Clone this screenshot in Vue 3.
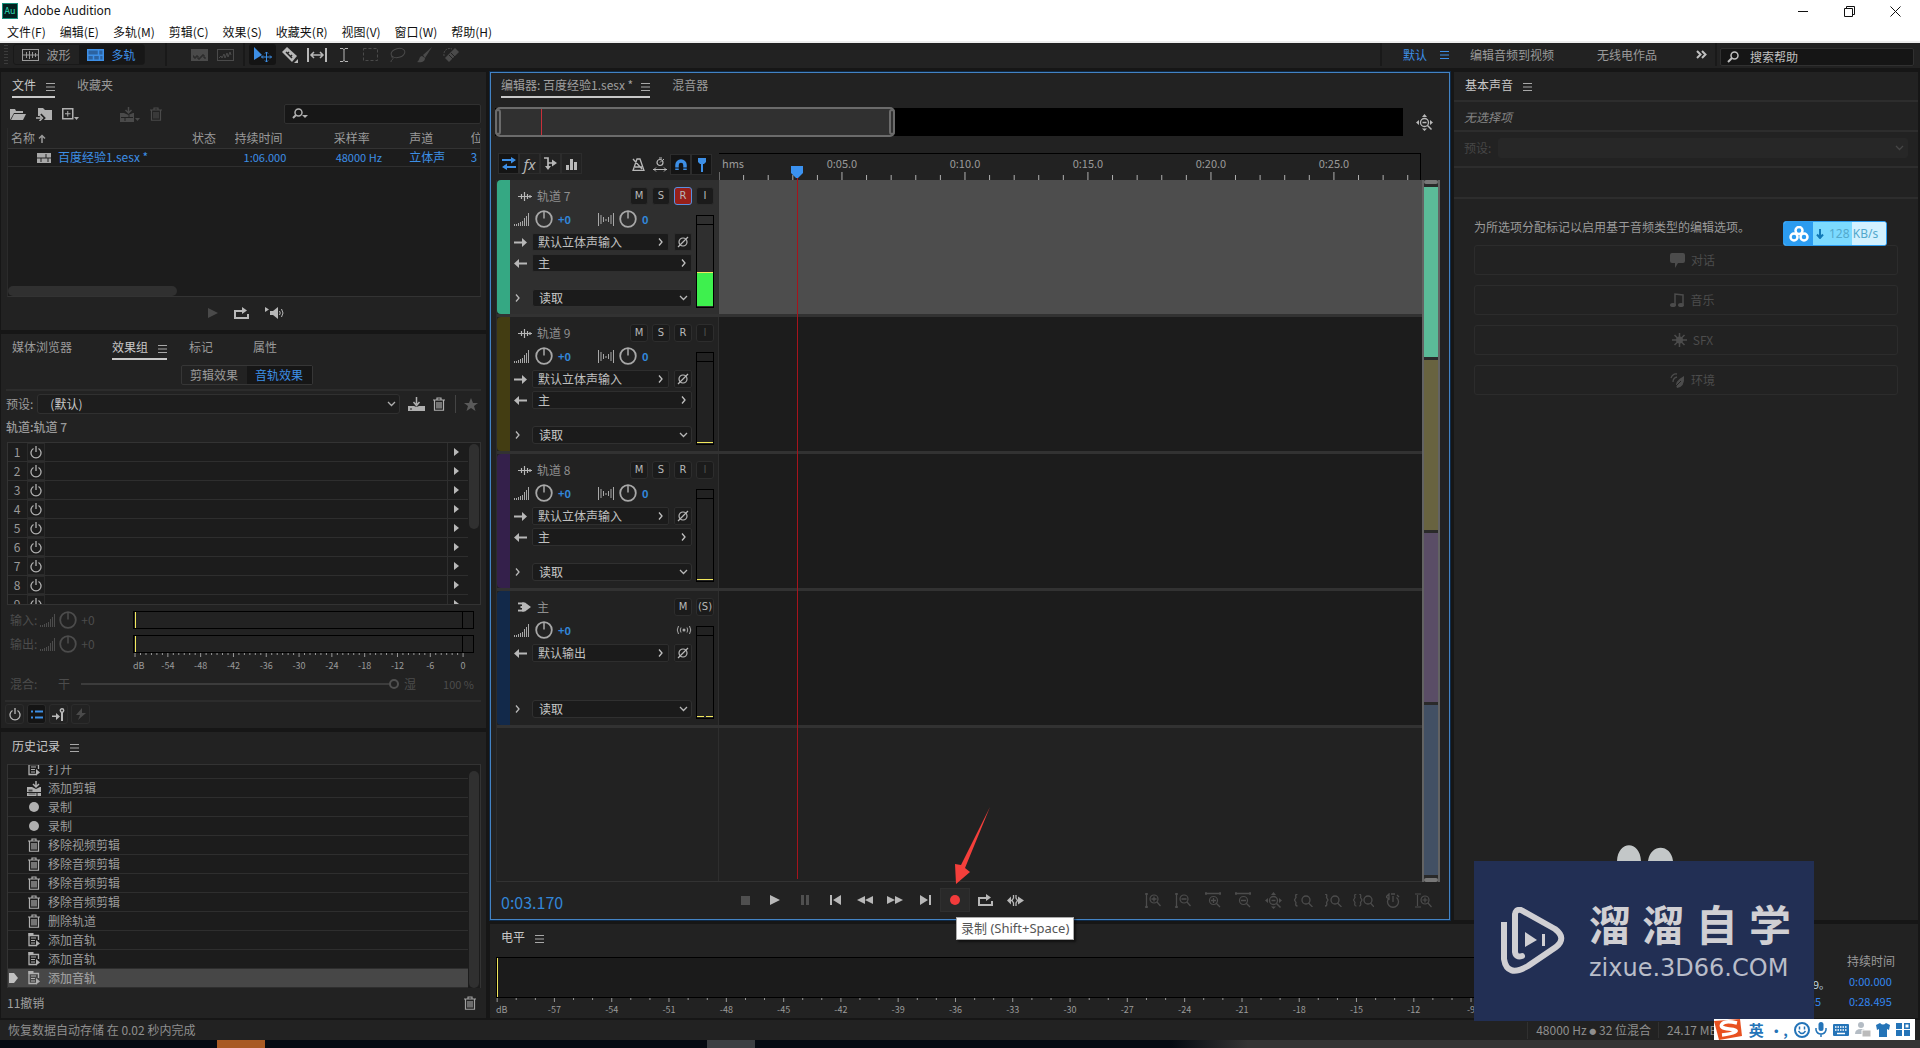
<script setup>
import { h, ref } from 'vue'

const glyphs = {
  wave: [17, 12, '<rect x=".5" y=".5" width="16" height="11" fill="none" stroke="currentColor"/><path d="M1 6h15M4.500 3v6M7.500 2v8M10.500 3v6M13.500 4v4" stroke="currentColor" fill="none"/>'],
  multi: [17, 12, '<path d="M.75.75h15.500v10.500H.75z" fill="#2c62a0" stroke="currentColor" stroke-width="1.500"/><path d="M0 6.250h17M11.500 1v5M6.500 7v4M12.500 7v4" stroke="currentColor" stroke-width="1.500"/>'],
  spectral: [17, 12, '<rect width="17" height="12" fill="currentColor"/><path d="M2 7h1v2h2V7h2v3h2V8h2V6h2v3h2" stroke="#222" fill="none"/>'],
  pitch: [17, 12, '<rect x=".5" y=".5" width="16" height="11" fill="none" stroke="currentColor"/><path d="M2 9l2-2 1 2 2-4 1 4 2-5 1 4 2-5 1 3" stroke="currentColor" fill="none"/>'],
  move: [20, 18, '<path d="M1 1v13l8-5z" fill="currentColor"/><path d="M13.500 6v10M8.500 11h10M12 7.500l1.500-1.500L15 7.500M12 14.500l1.500 1.500 1.500-1.500M10 9.500L8.500 11l1.500 1.500M17 9.500l1.500 1.500-1.500 1.500" stroke="currentColor" fill="none"/>'],
  razor: [18, 18, '<path d="M6 1L1 6l10 10 5-6z" fill="currentColor"/><path d="M5 6l6 6M6 8l2-2M9 11l2-2" stroke="#222" stroke-width="1.500"/><path d="M17 13v4h-4z" fill="currentColor"/>'],
  slip: [20, 14, '<path d="M1 0v14M19 0v14" stroke="currentColor" stroke-width="2"/><path d="M4 7h12M7 4L4 7l3 3M13 4l3 3-3 3" stroke="currentColor" stroke-width="1.500" fill="none"/>'],
  ibeam: [8, 16, '<path d="M0 1.500h3l1 1 1-1h3M4 2v12M0 14.500h3l1-1 1 1h3" stroke="currentColor" fill="none"/>'],
  marquee: [15, 13, '<rect x=".5" y=".5" width="14" height="12" fill="none" stroke="currentColor" stroke-dasharray="3 2"/>'],
  lasso: [17, 16, '<ellipse cx="9" cy="6" rx="7" ry="4.500" fill="none" stroke="currentColor" transform="rotate(-15 9 6)"/><path d="M3 9c-1 2 2 2 1 3s-2 1-2 3" stroke="currentColor" fill="none"/>'],
  brush: [16, 16, '<path d="M15 0L6 8l2 3z" fill="currentColor"/><path d="M5 9c-3 0-2 4-5 6 4 1 8 0 8-4z" fill="currentColor"/>'],
  heal: [17, 16, '<path d="M12 1l4 4-10 10-4-4z" fill="currentColor"/><path d="M8 6l4 4M6 8l4 4" stroke="#222"/><path d="M1 9C0 4 4 0 9 2" stroke="currentColor" fill="none" stroke-dasharray="2 1"/>'],
  lines: [9, 8, '<path d="M0 .5h9M0 4h9M0 7.500h9" stroke="currentColor"/>'],
  more: [11, 9, '<path d="M1 1l3.500 3.500L1 8M6 1l3.500 3.500L6 8" stroke="currentColor" stroke-width="2" fill="none"/>'],
  search: [12, 12, '<circle cx="7.500" cy="4.500" r="3.500" fill="none" stroke="currentColor" stroke-width="1.500"/><path d="M5 7L1 11" stroke="currentColor" stroke-width="2"/>'],
  searchDrop: [17, 12, '<circle cx="6.500" cy="4.500" r="3.500" fill="none" stroke="currentColor" stroke-width="1.500"/><path d="M4 7L1 10" stroke="currentColor" stroke-width="2"/><path d="M10 7h6l-3 3z" fill="currentColor"/>'],
  folder: [16, 12, '<path d="M0 12V1h5l1 2h7v2H4z" fill="currentColor"/><path d="M4 6h12l-3 6H1z" fill="currentColor"/>'],
  importFolder: [16, 14, '<path d="M2 9V1h5l2 2h7v10H8" fill="currentColor"/><path d="M0 11h6M4 8l3 3-3 3" stroke="#222" stroke-width="4"/><path d="M0 11h5M3.500 8l3 3-3 3" stroke="currentColor" stroke-width="1.500" fill="none"/>'],
  newFile: [17, 14, '<rect x=".75" y="1.750" width="10" height="10" fill="none" stroke="currentColor" stroke-width="1.500"/><path d="M3 6.750h5.500M5.750 4v5.500" stroke="currentColor"/><path d="M12 10h5l-2.500 3z" fill="currentColor"/>'],
  insert: [20, 15, '<path d="M8.500 0v6M5.500 3l3 3 3-3" stroke="currentColor" stroke-width="1.500" fill="none"/><path d="M0 6h4l4.500 2L13 6h1v9H0z" fill="currentColor"/><path d="M1 10.500h12M5 11v3M9 8v2" stroke="#222"/><path d="M15 11h5l-2.500 3z" fill="currentColor"/>'],
  addClip: [14, 15, '<path d="M9 0v6M6 3l3 3 3-3" stroke="currentColor" stroke-width="1.500" fill="none"/><path d="M0 6h5l4 2 4-2h1v9H0z" fill="currentColor"/><path d="M1.500 8.500h4v2h-4zM1.500 12.500h7v1h-7z" fill="#222" opacity=".7"/><path d="M0 11.500h14M10 12v3" stroke="#222"/>'],
  trash: [12, 14, '<path d="M0 3h12M4 2.500V1h4v1.500M1.500 3.500v9.750h9V3.500M4 5v6.500M6 5v6.500M8 5v6.500" stroke="currentColor" stroke-width="1.200" fill="none"/>'],
  session: [14, 10, '<rect width="14" height="10" fill="currentColor"/><path d="M0 5h14M9 1v4M4 5v4M11 5v4" stroke="#222"/>'],
  up: [8, 9, '<path d="M4 9V2M1 4.500l3-3 3 3" stroke="currentColor" stroke-width="1.500" fill="none"/>'],
  play: [10, 10, '<path d="M0 0v10l10-5z" fill="currentColor"/>'],
  loop: [15, 12, '<path d="M5 4H1v7h13V7" stroke="currentColor" stroke-width="2" fill="none"/><path d="M3 3h5V0l5 3.500L8 7V5H3z" fill="currentColor"/>'],
  speaker: [20, 12, '<path d="M0 0l4 2.500L0 5z" fill="currentColor"/><path d="M5 4h3l5-4v12L8 8H5z" fill="currentColor"/><path d="M14.500 4q1.500 2 0 4M16.500 2q3 4 0 8" stroke="currentColor" fill="none"/>'],
  save: [17, 14, '<path d="M0 9h6l2.500 1L11 9h6v5H0z" fill="currentColor"/><path d="M8.500 0v7M5.500 5l3 3.500 3-3.500" stroke="currentColor" stroke-width="1.500" fill="none"/><path d="M2 12h2" stroke="#222"/>'],
  star: [14, 13, '<path d="M7 0l2 5h5l-4 3 1.500 5L7 10l-4.500 3L4 8 0 5h5z" fill="currentColor"/>'],
  power: [12, 13, '<path d="M3.500 2.500a5 5 0 1 0 5 0M6 0v6" stroke="currentColor" stroke-width="1.300" fill="none"/>'],
  right: [5, 8, '<path d="M0 0v8l5-4z" fill="currentColor"/>'],
  bars: [16, 14, '<path d="M.5 14v-2M2.500 14v-2M4.500 14v-3M6.500 14v-4M8.500 14V9M10.500 14V6M12.500 14V4M14.500 14V1" stroke="currentColor"/>'],
  knob: [18, 18, '<circle cx="9" cy="9" r="7.800" fill="none" stroke="currentColor" stroke-width="1.800"/><path d="M9 2v6.500" stroke="currentColor" stroke-width="1.500"/>'],
  pan: [16, 13, '<path d="M.5 0v13M3 2v9M5.500 4v5M8 6v2M10.500 4v5M13 2v9M15.500 0v13" stroke="currentColor"/>'],
  list: [12, 9, '<path d="M0 1.500h2M0 7.500h2M4 1.500h8M4 7.500h8" stroke="currentColor" stroke-width="2"/>'],
  route: [13, 13, '<path d="M0 7.500h4V5l4 3.500L4 12V9H0z" fill="currentColor"/><path d="M10 4v9" stroke="currentColor" stroke-width="2"/><circle cx="10" cy="2.500" r="1.700" fill="none" stroke="currentColor" stroke-width="1.500"/>'],
  bolt: [10, 12, '<path d="M6 0L0 7h4l-2 5 8-7H6z" fill="currentColor"/>'],
  doc: [13, 14, '<path d="M1 0v12.500h8M1 2.500h9.500V7" stroke="currentColor" stroke-width="1.300" fill="none"/><path d="M.5 0h5v3h-5z" fill="currentColor"/><path d="M3 5h5M3 7.500h4M3 10h4" stroke="currentColor"/><path d="M8 7v6.500l4-3z" fill="currentColor"/>'],
  dot: [10, 10, '<circle cx="5" cy="5" r="5" fill="currentColor"/>'],
  marker: [9, 10, '<path d="M0 0h5l4 5-4 5H0z" fill="currentColor"/>'],
  swap: [14, 13, '<path d="M0 3h10M14 10H4" stroke="currentColor" stroke-width="1.800"/><path d="M9 0l5 3-5 3.500zM5 6.500v6.500L0 10z" fill="currentColor"/>'],
  send: [13, 13, '<path d="M0 1h4v9M4 6h5" stroke="currentColor" stroke-width="1.700" fill="none"/><path d="M1 9h6l-3 4zM8 2.500l5 3.500-5 3.500z" fill="currentColor"/>'],
  eq: [11, 12, '<path d="M0 7h3v5H0zM4 1h3v11H4zM8 4h3v8H8z" fill="currentColor"/>'],
  metronome: [13, 13, '<path d="M5 1h3l4 11.500H1zM3 9h7M1 1l9 10" stroke="currentColor" stroke-width="1.300" fill="none"/>'],
  clockSpan: [14, 15, '<circle cx="7" cy="5.500" r="3" fill="none" stroke="currentColor" stroke-width="1.200"/><path d="M6 1h3M10 2l1 1M7 5.500l2-2M0 12.500h14M3 10.500l-2 2 2 2M11 10.500l2 2-2 2" stroke="currentColor" fill="none"/>'],
  magnet: [12, 12, '<path d="M2 11V6a4 4 0 0 1 8 0v5" stroke="currentColor" stroke-width="3.500" fill="none"/><path d="M0 9h4M8 9h4" stroke="#111"/>'],
  pin: [8, 14, '<path d="M0 0h8v4L6 6H2L0 4zM3 6h2v8H3z" fill="currentColor"/>'],
  trackWave: [14, 9, '<path d="M0 4.500h14M3.500 2v5M6.500 0v9M9.500 2v5M12 3v3" stroke="currentColor" stroke-width="1.200"/>'],
  master: [13, 10, '<path d="M0 1.500h6M0 5h6M0 8.500h6" stroke="currentColor" stroke-width="2"/><path d="M4 .5h3l6 4.500-6 4.500H4z" fill="currentColor"/><path d="M0 3.250h3.500M0 6.750h3.500" stroke="#222"/><path d="M0 4h2.500v2H0z" fill="#222"/>'],
  inArrow: [13, 9, '<path d="M0 4.500h10" stroke="currentColor" stroke-width="2"/><path d="M8 0l5 4.500L8 9z" fill="currentColor"/>'],
  outArrow: [13, 9, '<path d="M13 4.500H3" stroke="currentColor" stroke-width="2"/><path d="M5 0L0 4.500 5 9z" fill="currentColor"/>'],
  chevR: [5, 8, '<path d="M1 .5L4 4 1 7.500" stroke="currentColor" stroke-width="1.300" fill="none"/>'],
  chevD: [9, 6, '<path d="M1 1l3.500 3.500L8 1" stroke="currentColor" stroke-width="1.300" fill="none"/>'],
  phase: [12, 12, '<circle cx="6" cy="6" r="4" fill="none" stroke="currentColor" stroke-width="1.200"/><path d="M1 11L11 1" stroke="currentColor" stroke-width="1.200"/>'],
  cast: [16, 8, '<circle cx="8" cy="4" r="1.500" fill="currentColor"/><path d="M5 1.500q-1.500 2.500 0 5M2.500 0q-2.500 4 0 8M11 1.500q1.500 2.500 0 5M13.500 0q2.500 4 0 8" stroke="currentColor" fill="none"/>'],
  stop: [9, 9, '<rect width="9" height="9" fill="currentColor"/>'],
  pause: [8, 10, '<path d="M0 0h3v10H0zM5 0h3v10H5z" fill="currentColor"/>'],
  prev: [11, 10, '<path d="M0 0h2v10H0zM11 0v10L3 5z" fill="currentColor"/>'],
  next: [11, 10, '<path d="M9 0h2v10H9zM0 0v10l8-5z" fill="currentColor"/>'],
  rew: [16, 8, '<path d="M8 0v8L0 4zM16 0v8L8 4z" fill="currentColor"/>'],
  ffwd: [16, 8, '<path d="M0 0v8l8-4zM8 0v8l8-4z" fill="currentColor"/>'],
  skip: [17, 11, '<path d="M4 1.500L0 5.500l4 4zM11 1.500l6 4-6 4z" fill="currentColor"/><path d="M6.500 0v3L5 5.500 6.500 8v3M9 0v3l1.500 2.500L9 8v3M3 5.500h2M10 5.500h3" stroke="currentColor" stroke-width="1.300" fill="none"/>'],
  zInV: [16, 15, '<path d="M1.500 0v15M0 1h3M0 14h3M12 9l3.500 4M6.500 6h5M9 3.500v5" stroke="currentColor" stroke-width="1.300"/><circle cx="9" cy="6" r="4" fill="none" stroke="currentColor" stroke-width="1.200"/>'],
  zOutV: [16, 15, '<path d="M1.500 0v15M0 1h3M0 14h3M12 9l3.500 4M6.500 6h5" stroke="currentColor" stroke-width="1.300"/><circle cx="9" cy="6" r="4" fill="none" stroke="currentColor" stroke-width="1.200"/>'],
  zInH: [16, 16, '<path d="M0 1.500h16M1 0v3M15 0v3M11 11l4 4M6 8.500h5M8.500 6v5" stroke="currentColor" stroke-width="1.300"/><circle cx="8.500" cy="8.500" r="4" fill="none" stroke="currentColor" stroke-width="1.200"/>'],
  zOutH: [16, 16, '<path d="M0 1.500h16M1 0v3M15 0v3M11 11l4 4M6 8.500h5" stroke="currentColor" stroke-width="1.300"/><circle cx="8.500" cy="8.500" r="4" fill="none" stroke="currentColor" stroke-width="1.200"/>'],
  zFull: [17, 17, '<circle cx="8.500" cy="8.500" r="4" fill="none" stroke="currentColor" stroke-width="1.300"/><path d="M6.500 8.500h4M11.500 11.500l4 4" stroke="currentColor" stroke-width="1.500"/><path d="M8.500 0L6 3h5zM8.500 17L6 14.500h5zM0 8.500L3 6v5zM17 8.500L14 6v5z" fill="currentColor"/>'],
  zLeft: [19, 13, '<path d="M3.500 0Q1 0 2 3.500L.5 6 2 8.500Q1 12 3.500 12M14.500 9l4 4" stroke="currentColor" stroke-width="1.300" fill="none"/><circle cx="12" cy="6" r="4" fill="none" stroke="currentColor" stroke-width="1.300"/>'],
  zRight: [17, 13, '<path d="M0 0q2.500 0 1.500 3.500L3 6 1.500 8.500Q2.500 12 0 12M12.500 9l4 4" stroke="currentColor" stroke-width="1.300" fill="none"/><circle cx="10" cy="6" r="4" fill="none" stroke="currentColor" stroke-width="1.300"/>'],
  zSel: [21, 13, '<path d="M3.500 0Q1 0 2 3.500L.5 6 2 8.500Q1 12 3.500 12M6 0q2.500 0 1.500 3.500L9 6 7.500 8.500Q8.500 12 6 12M17.500 9l3.500 4" stroke="currentColor" stroke-width="1.200" fill="none"/><circle cx="15" cy="6" r="4" fill="none" stroke="currentColor" stroke-width="1.300"/>'],
  timer: [14, 15, '<path d="M3.500 4.500a5.500 5.500 0 1 0 7 0M7 3v6M0 4l3-3v5zM5 1h4M11 2l2 2" stroke="currentColor" stroke-width="1.300" fill="none"/>'],
  zTrack: [17, 15, '<path d="M2.500 2v11M0 1h6M0 14h6M13 10l3.500 4M7.500 7h5M10 4.500v5" stroke="currentColor" stroke-width="1.200"/><circle cx="10" cy="7" r="4" fill="none" stroke="currentColor" stroke-width="1.200"/>'],
  chat: [15, 15, '<path d="M2 0h11q2 0 2 2v6q0 2-2 2H8l-3 5v-5H2Q0 10 0 8V2Q0 0 2 0z" fill="currentColor"/>'],
  music: [14, 14, '<path d="M5 12V1l8 1v9" stroke="currentColor" stroke-width="1.500" fill="none"/><ellipse cx="3" cy="12" rx="3" ry="2" fill="currentColor"/><ellipse cx="11" cy="12" rx="3" ry="2" fill="currentColor"/>'],
  burst: [15, 14, '<path d="M7.500 0v14M0 7h15M2.500 2l10 10M12.500 2l-10 10" stroke="currentColor" stroke-width="1.500"/><circle cx="7.500" cy="7" r="3.500" fill="currentColor"/>'],
  leaf: [15, 15, '<path d="M14 3q1 11-7 12-4-6 7-12z" fill="currentColor"/><path d="M1 5q2-5 6-4M3 9q0-4 4-5" stroke="currentColor" stroke-width="1.300" fill="none"/><path d="M4 15l7-7" stroke="#222"/>'],
  minus: [10, 10, '<path d="M0 5.500h10" stroke="currentColor"/>'],
  restore: [11, 11, '<path d="M.5 2.500h8v8h-8zM2.500 2V.5h8v8H9" stroke="currentColor" fill="none"/>'],
  close: [11, 11, '<path d="M.5.5l10 10M10.500.5l-10 10" stroke="currentColor" fill="none"/>'],
  smile: [16, 16, '<circle cx="8" cy="8" r="7" fill="none" stroke="currentColor" stroke-width="2"/><path d="M4.500 9q3.500 5 7 0M5.500 4.500v3M10.500 4.500v3" stroke="currentColor" stroke-width="1.500" fill="none"/>'],
  mic: [12, 15, '<rect x="3.500" width="5" height="9" rx="2.500" fill="currentColor"/><path d="M1 6v2q1 4 5 4t5-4V6M6 12v3" stroke="currentColor" stroke-width="1.500" fill="none"/>'],
  keys: [16, 12, '<rect width="16" height="12" rx="1" fill="currentColor"/><path d="M2 3h12M2 6h12" stroke="#fff" stroke-width="1.500" stroke-dasharray="1.500 1"/><path d="M4 9.500h8" stroke="#fff" stroke-width="1.500"/>'],
  person: [16, 15, '<circle cx="6" cy="3" r="3" fill="currentColor"/><path d="M0 12q0-5 6-5t5 5z" fill="currentColor"/><path d="M7 8h9v7H7z" fill="#bbb" stroke="#fff"/>'],
  shirt: [14, 14, '<path d="M4 0q3 3 6 0l4 2-1 5-2-1v8H3V6L1 7 0 2z" fill="currentColor"/>'],
  grid: [14, 13, '<path d="M0 0h6v6H0zM8 7h6v6H8zM0 7h6v6H0z" fill="currentColor"/><path d="M8.750.75h4.500v4.500h-4.500z" fill="none" stroke="currentColor" stroke-width="1.500"/>'],
  sogou: [29, 21, '<path d="M0 2L26 0l2 17-23 4z" fill="#e8501f"/><path d="M23 4Q11 1 8 5t7 5 6 3-13 3" stroke="#fff" stroke-width="3.500" fill="none"/>'],
  baidu: [20, 16, '<circle cx="10" cy="4.500" r="3.500" fill="none" stroke="#fff" stroke-width="2.500"/><circle cx="5" cy="11" r="3.500" fill="none" stroke="#fff" stroke-width="2.500"/><circle cx="15" cy="11" r="3.500" fill="none" stroke="#fff" stroke-width="2.500"/>'],
  down: [8, 10, '<path d="M4 0v9M1 5.500L4 9l3-3.500" stroke="currentColor" stroke-width="2" fill="none"/>'],
  brand: [66, 68, '<path d="M15 8q0-6 6-5l34 19q12 9 1 18L28 59Q7 71 4 52V15" fill="none" stroke="#d0cfd3" stroke-width="6" stroke-linejoin="round"/><path d="M15 8v37q1 6 7 4" fill="none" stroke="#d0cfd3" stroke-width="6" stroke-linecap="round"/><path d="M25 25v15l12-7zM42 27h3v12h-3z" fill="#d0cfd3"/>'],
  ears: [56, 16, '<path d="M0 16C1-5 23-5 24 16zM31 16C34-2 54-1 56 16z" fill="#c3c7c8"/>'],
  arrow: [36, 78, '<path d="M35 0L6 58 0 57l1 20 14-12-5-4z" fill="#f43f3b"/>'],
}
const Icon = (props) => {
  const [w, hh, body] = glyphs[props.name]
  return h('svg', { class: 'icon', width: w, height: hh, viewBox: `0 0 ${w} ${hh}`, 'aria-hidden': 'true', innerHTML: body })
}
Icon.props = ['name']

const menus = ['文件(F)', '编辑(E)', '多轨(M)', '剪辑(C)', '效果(S)', '收藏夹(R)', '视图(V)', '窗口(W)', '帮助(H)']
const tools = [
  ['move', 'on'], ['razor', ''], ['slip', ''], ['ibeam', ''],
  ['marquee', 'off'], ['lasso', 'off'], ['brush', 'off'], ['heal', 'off'],
]
const slots = [1, 2, 3, 4, 5, 6, 7, 8, 9]
const history = [
  ['doc', '打开'], ['addClip', '添加剪辑'], ['dot', '录制'], ['dot', '录制'], ['trash', '移除视频剪辑'],
  ['trash', '移除音频剪辑'], ['trash', '移除音频剪辑'], ['trash', '移除音频剪辑'], ['trash', '删除轨道'],
  ['doc', '添加音轨'], ['doc', '添加音轨'], ['doc', '添加音轨'],
]
const tracks = [
  { name: '轨道 7', color: '#35a883', input: '默认立体声输入', output: '主', armed: true },
  { name: '轨道 9', color: '#433d12', input: '默认立体声输入', output: '主' },
  { name: '轨道 8', color: '#34204b', input: '默认立体声输入', output: '主' },
  { name: '主', color: '#12294a', output: '默认输出', master: true },
]
const transport = ['stop', 'play', 'pause', 'prev', 'rew', 'ffwd', 'next', 'dot', 'loop', 'skip']
const zooms = ['zInV', 'zOutV', 'zInH', 'zOutH', 'zFull', 'zLeft', 'zRight', 'zSel', 'timer', 'zTrack']
const kinds = [['chat', '对话'], ['music', '音乐'], ['burst', 'SFX'], ['leaf', '环境']]

const viewSeconds = 28.5
const playhead = 3.17
const seconds = Array.from({ length: 29 }, (_, i) => i)
const pct = (n) => `${n.toFixed(2)}%`
const atSecond = (s) => pct((s / viewSeconds) * 100)
const stamp = (s) => `0:${String(s).padStart(2, '0')}.0`
const db = Array.from({ length: 61 }, (_, i) => i)
const atRack = (i) => pct(0.6 + (i / 60) * 96.2)
const atLevel = (i) => pct(0.1 + (i / 60) * 98.1)
const mix = ref(100)
</script>

<template>
  <div class="app">
    <header class="titlebar">
      <span class="logo">Au</span>
      <span class="title">Adobe Audition</span>
      <div class="winbtns">
        <button aria-label="最小化"><Icon name="minus" /></button>
        <button aria-label="还原"><Icon name="restore" /></button>
        <button aria-label="关闭"><Icon name="close" /></button>
      </div>
    </header>
    <nav class="menubar">
      <button v-for="m in menus" :key="m">{{ m }}</button>
    </nav>

    <div class="toolbar">
      <span class="grip"></span>
      <div class="views">
        <button><Icon name="wave" />波形</button>
        <button class="on"><Icon name="multi" />多轨</button>
      </div>
      <span class="sep"></span>
      <div class="displays off"><Icon name="spectral" /><Icon name="pitch" /></div>
      <span class="sep"></span>
      <div class="tools">
        <button v-for="t in tools" :key="t[0]" :class="t[1]" :aria-label="t[0]"><Icon :name="t[0]" /></button>
      </div>
      <div class="spaces">
        <button class="blue">默认<Icon name="lines" /></button>
        <button>编辑音频到视频</button>
        <button>无线电作品</button>
        <button class="light" aria-label="更多"><Icon name="more" /></button>
      </div>
      <label class="help"><Icon name="search" /><input type="text" value="搜索帮助" aria-label="搜索帮助" /></label>
    </div>

    <main class="work">
      <div class="left">
        <section class="panel files">
          <div class="tabs">
            <button class="active">文件<Icon name="lines" /></button>
            <button>收藏夹</button>
          </div>
          <div class="filebar">
            <button aria-label="打开"><Icon name="folder" /></button>
            <button aria-label="导入"><Icon name="importFolder" /></button>
            <button aria-label="新建"><Icon name="newFile" /></button>
            <button class="off gap" aria-label="插入"><Icon name="insert" /></button>
            <button class="off" aria-label="删除"><Icon name="trash" /></button>
            <label class="filter"><Icon name="searchDrop" /><input type="text" aria-label="筛选" /></label>
          </div>
          <div class="filelist">
            <table>
              <thead>
                <tr><th class="cname">名称<Icon name="up" /></th><th class="cstate">状态</th><th class="cdur">持续时间</th><th class="crate">采样率</th><th class="cchan">声道</th><th class="cbit">位</th></tr>
              </thead>
              <tbody>
                <tr><td class="fname"><Icon name="session" />百度经验1.sesx *</td><td></td><td class="num">1:06.000</td><td class="num">48000 Hz</td><td>立体声</td><td>3</td></tr>
              </tbody>
            </table>
            <span class="hscroll"></span>
          </div>
          <div class="preview">
            <button class="off" aria-label="播放"><Icon name="play" /></button>
            <button aria-label="循环"><Icon name="loop" /></button>
            <button aria-label="自动播放"><Icon name="speaker" /></button>
          </div>
        </section>

        <section class="panel rack">
          <div class="tabs wide">
            <button>媒体浏览器</button>
            <button class="active">效果组<Icon name="lines" /></button>
            <button>标记</button>
            <button>属性</button>
          </div>
          <div class="switch">
            <button>剪辑效果</button><button class="on">音轨效果</button>
          </div>
          <div class="preset">
            <label for="preset">预设:</label>
            <div class="pick"><select id="preset"><option>(默认)</option></select><Icon name="chevD" /></div>
            <button aria-label="保存"><Icon name="save" /></button>
            <button aria-label="删除"><Icon name="trash" /></button>
            <span class="bar"></span>
            <button class="dim" aria-label="收藏"><Icon name="star" /></button>
          </div>
          <p class="which">轨道:轨道 7</p>
          <div class="slots">
            <ol>
              <li v-for="n in slots" :key="n">
                <span class="no">{{ n }}</span>
                <button class="pw" :aria-label="'开关 ' + n"><Icon name="power" /></button>
                <span class="fx"></span>
                <button class="go" :aria-label="'选择 ' + n"><Icon name="right" /></button>
              </li>
            </ol>
            <span class="vscroll short"></span>
          </div>
          <div class="io">
            <div class="knobs">
              <div class="kr">输入:<Icon name="bars" /><Icon name="knob" />+0</div>
              <div class="kr">输出:<Icon name="bars" /><Icon name="knob" />+0</div>
            </div>
            <div class="meters">
              <div class="hm"></div>
              <div class="hm"></div>
              <svg class="ruler" width="100%" height="22">
                <line v-for="i in db" :key="i" :x1="atRack(i)" :x2="atRack(i)" y1="0" :y2="i % 6 ? 2 : 4" />
                <text x="0" y="16">dB</text>
                <text v-for="i in 10" :key="i" :x="atRack(i * 6)" y="16">{{ i * 6 - 60 }}</text>
              </svg>
            </div>
          </div>
          <div class="mix">
            <label for="mix">混合:</label><span>干</span>
            <input id="mix" v-model="mix" type="range" min="0" max="100" disabled />
            <span>湿</span><output for="mix">{{ mix }} %</output>
          </div>
          <div class="rackfoot">
            <button aria-label="电源"><Icon name="power" /></button>
            <button class="on" aria-label="列表"><Icon name="list" /></button>
            <button aria-label="推子"><Icon name="route" /></button>
            <button class="off" aria-label="预渲染"><Icon name="bolt" /></button>
          </div>
        </section>

        <section class="panel hist">
          <div class="tabs"><button class="sole">历史记录<Icon name="lines" /></button></div>
          <div class="histlist">
            <ul>
              <li v-for="(r, i) in history" :key="i" :class="{ cur: i === history.length - 1 }">
                <span class="mk"><Icon v-if="i === history.length - 1" name="marker" /></span>
                <span class="hi"><Icon :name="r[0]" /></span>{{ r[1] }}
              </li>
            </ul>
            <span class="vscroll"></span>
          </div>
          <div class="histfoot"><span>11撤销</span><button aria-label="删除"><Icon name="trash" /></button></div>
        </section>
      </div>

      <section class="panel editor">
        <div class="tabs">
          <button class="active plain">编辑器: 百度经验1.sesx *<Icon name="lines" /></button>
          <button>混音器</button>
        </div>
        <div class="overview">
          <div class="strip"><div class="thumb"><span class="grab"></span><span class="ov"></span><span class="grab end"></span></div></div>
          <button aria-label="全部缩小"><Icon name="zFull" /></button>
        </div>
        <div class="headrow">
          <div class="modes">
            <div class="grp">
              <button class="on" aria-label="输入输出"><Icon name="swap" /></button>
              <button class="fxb">fx</button>
              <button aria-label="发送"><Icon name="send" /></button>
              <button aria-label="均衡"><Icon name="eq" /></button>
            </div>
            <div class="snap">
              <button aria-label="节拍器"><Icon name="metronome" /></button>
              <button aria-label="时间伸缩"><Icon name="clockSpan" /></button>
              <button class="on" aria-label="对齐"><Icon name="magnet" /></button>
              <button class="on" aria-label="播放指示器"><Icon name="pin" /></button>
            </div>
          </div>
          <div class="time">
            <svg width="100%" height="26">
              <text class="hms" x="3" y="14">hms</text>
              <g v-for="s in seconds" :key="s">
                <line :x1="atSecond(s)" :x2="atSecond(s)" :y1="s % 5 ? 21 : 18" y2="26" />
                <text v-if="s && s % 5 === 0" :x="atSecond(s)" y="14">{{ stamp(s) }}</text>
              </g>
            </svg>
          </div>
        </div>
        <div class="body">
          <div class="tracks">
            <div v-for="t in tracks" :key="t.name" class="track" :class="{ armed: t.armed }">
              <span class="color" :style="{ background: t.color }"></span>
              <div class="head">
                <div class="r1">
                  <span class="ti"><Icon :name="t.master ? 'master' : 'trackWave'" /></span>
                  <span class="tn">{{ t.name }}</span>
                  <template v-if="t.master"><button>M</button><button>(S)</button></template>
                  <template v-else>
                    <button>M</button><button>S</button>
                    <button :class="{ rec: t.armed }">R</button>
                    <button :class="{ faint: !t.armed }">I</button>
                  </template>
                </div>
                <div class="r2">
                  <Icon name="bars" /><span class="kn"><Icon name="knob" /></span><b>+0</b>
                  <template v-if="t.master"><span class="cast"><Icon name="cast" /></span></template>
                  <template v-else><Icon name="pan" /><span class="kn"><Icon name="knob" /></span><b>0</b></template>
                </div>
                <div class="r3">
                  <Icon :name="t.master ? 'outArrow' : 'inArrow'" />
                  <button class="pop">{{ t.master ? t.output : t.input }}<Icon name="chevR" /></button>
                  <button class="ph" aria-label="反相"><Icon name="phase" /></button>
                </div>
                <div v-if="!t.master" class="r3"><Icon name="outArrow" /><button class="pop">{{ t.output }}<Icon name="chevR" /></button></div>
                <div class="r3 auto">
                  <button class="exp" aria-label="展开"><Icon name="chevR" /></button>
                  <div class="pick"><select aria-label="自动化模式"><option>读取</option></select><Icon name="chevD" /></div>
                </div>
                <div class="meter" :class="{ two: t.master }"><i></i><i v-if="t.master"></i></div>
              </div>
              <div class="lane"></div>
            </div>
            <div class="rest"></div>
            <div class="cursor">
              <div class="ph-line" :style="{ left: atSecond(playhead) }">
                <svg width="12" height="12"><path d="M0 0h12v7l-5 5H5L0 7z" fill="#3b92f0" /></svg>
              </div>
            </div>
          </div>
          <div class="navi"><span class="cap"></span><i class="n1"></i><i class="n2"></i><i class="n3"></i><i class="n4"></i><span class="cap"></span></div>
        </div>
        <div class="transport">
          <output class="clock">0:03.170</output>
          <div class="keysrow">
            <div v-for="k in transport" :key="k" class="key">
              <button :class="{ dim: k === 'stop' || k === 'pause', record: k === 'dot' }" :aria-label="k"><Icon :name="k" /></button>
              <template v-if="k === 'dot'">
                <span class="pointer"><Icon name="arrow" /></span>
                <span class="tip" role="tooltip">录制 (Shift+Space)</span>
              </template>
            </div>
          </div>
          <div class="zoomrow"><button v-for="z in zooms" :key="z" :aria-label="z"><Icon :name="z" /></button></div>
        </div>
      </section>

      <section class="panel sound">
        <div class="tabs"><button class="sole">基本声音<Icon name="lines" /></button></div>
        <p class="none">无选择项</p>
        <div class="spre"><label for="spre">预设:</label><div class="pick"><select id="spre" disabled></select><Icon name="chevD" /></div></div>
        <div class="blank"></div>
        <p class="hint">为所选项分配标记以启用基于音频类型的编辑选项。</p>
        <div class="kinds"><button v-for="k in kinds" :key="k[1]" disabled><Icon :name="k[0]" />{{ k[1] }}</button></div>
      </section>

      <div class="bottom">
        <section class="panel level">
          <div class="tabs"><button class="sole">电平<Icon name="lines" /></button></div>
          <div class="lv"></div>
          <svg class="ruler" width="100%" height="20">
            <line v-for="i in db" :key="i" :x1="atLevel(i)" :x2="atLevel(i)" y1="0" :y2="i % 3 ? 2 : 4" />
            <text x="0" y="15">dB</text>
            <text v-for="i in 17" :key="i" :x="atLevel(i * 3)" y="15">{{ i * 3 - 60 }}</text>
          </svg>
        </section>
        <section class="panel range">
          <table>
            <thead><tr><th></th><th>持续时间</th></tr></thead>
            <tbody>
              <tr><td></td><td>0:00.000</td></tr>
              <tr><td>0:28.495</td><td>0:28.495</td></tr>
            </tbody>
          </table>
        </section>
      </div>
    </main>

    <footer class="status">
      <span class="msg">恢复数据自动存储 在 0.02 秒内完成</span>
      <span class="cell">48000 Hz <small>●</small> 32 位混合</span>
      <span class="cell mem">24.17 MB</span>
    </footer>
    <div class="taskbar"><span class="t1"></span><span class="t2"></span><span class="tc">14:05</span></div>

    <div class="speed">
      <span class="bd"><Icon name="baidu" /></span>
      <span class="rate"><Icon name="down" />128 KB/s</span>
    </div>
    <span class="ears"><Icon name="ears" /></span>
    <span class="stray">9。</span>
    <div class="brand">
      <Icon name="brand" />
      <div class="bt">
        <div class="cn"><span v-for="(c, i) in '溜溜自学'" :key="i">{{ c }}</span></div>
        <div class="en">zixue.3D66.COM</div>
      </div>
    </div>
    <div class="ime">
      <Icon name="sogou" /><b>英</b><span class="pt">•,</span><Icon name="smile" /><Icon name="mic" /><Icon name="keys" />
      <span class="pale"><Icon name="person" /></span><Icon name="shirt" /><Icon name="grid" />
    </div>
  </div>
</template>

<style>
body { margin: 0; background: #161616; }
</style>

<style scoped>
* { box-sizing: border-box; }
.app {
  position: relative; display: flex; flex-direction: column; min-height: 100vh; overflow: hidden;
  background: #161616; color: #9a9a9a; font: 12px/16px "Noto Sans CJK SC", sans-serif;
}
.icon { flex: none; display: block; }
button, input, select { font: inherit; color: inherit; background: none; border: 0; margin: 0; padding: 0; }
button { display: flex; align-items: center; justify-content: center; white-space: nowrap; }
select { appearance: none; opacity: 1; }
p { margin: 0; }
.off { color: #4a4a4a; }

.titlebar { display: flex; align-items: center; height: 22px; background: #fff; color: #111; }
.logo { width: 16px; height: 16px; margin: 0 6px 0 2px; border: 1px solid #17917c; background: #03211f; color: #2fdcb5; font-size: 9px; line-height: 14px; text-align: center; }
.title { font-family: "Noto Sans", sans-serif; }
.winbtns { display: flex; margin-left: auto; }
.winbtns button { width: 46px; height: 20px; }
.winbtns button:last-child { margin-right: 2px; }
.menubar { display: flex; gap: 14px; height: 21px; padding-left: 7px; background: #fff; color: #111; border-bottom: 2px solid #eee; }

.toolbar { display: flex; align-items: center; height: 25px; margin-bottom: 4px; padding-bottom: 2px; background: #222; }
.grip { width: 4px; height: 19px; margin: 0 5px 0 4px; background: repeating-linear-gradient(#3c3c3c 0 1px, #222 1px 3px); }
.views { display: flex; border: 1px solid #191919; border-radius: 3px; }
.views button { gap: 7px; width: 65px; height: 19px; }
.views .on { background: #171717; color: #3d8fe6; }
.sep { width: 2px; height: 23px; background: #191919; margin: 0 0 0 20px; }
.displays { display: flex; gap: 9px; padding-left: 24px; }
.displays + .sep { margin: 0 4px 0 9px; }
.tools { display: flex; color: #b8b8b8; }
.tools button { width: 27px; height: 21px; }
.tools .on { background: #141414; border-radius: 3px; color: #3d8fe6; }
.tools .off { color: #4a4a4a; }
.spaces { display: flex; align-items: center; gap: 39px; height: 23px; margin-left: auto; padding: 0 8px 0 21px; border-left: 2px solid #191919; border-right: 2px solid #191919; }
.spaces button:first-child { gap: 13px; margin-right: -18px; }
.spaces button:nth-child(2) { margin-right: 4px; }
.blue { color: #3d8fe6; }
.light { color: #c0c0c0; }
.help { display: flex; align-items: center; gap: 11px; width: 194px; height: 18px; margin: 4px 6px 0 3px; padding-left: 6px; background: #151515; border: 1px solid #303030; border-radius: 2px; color: #c0c0c0; }
.help input { flex: 1; min-width: 0; }

.work { flex: 1; display: grid; grid-template-columns: minmax(0, 486fr) minmax(0, 960fr) minmax(0, 464fr); grid-template-rows: 1fr 94px; gap: 4px; padding: 0 2px 2px 0; }
.left { grid-row: 1 / 3; display: flex; flex-direction: column; gap: 4px; padding-left: 1px; }
.panel { background: #222; display: flex; flex-direction: column; min-width: 0; }
.tabs { display: flex; gap: 22px; padding: 5px 11px 0; height: 26px; flex: none; }
.tabs button { height: 21px; gap: 10px; align-items: flex-start; border-bottom: 2px solid transparent; }
.tabs .icon { margin-top: 6px; color: #a8a8a8; }
.tabs .active, .tabs .sole { color: #c8c8c8; }
.tabs .active { border-color: #c8c8c8; }
.tabs .plain { color: #9f9f9f; }

.files { flex: 1; }
.filebar { display: flex; align-items: center; height: 30px; padding: 2px 5px 0 9px; color: #b0b0b0; gap: 10px; }
.filebar .gap { margin-left: 31px; }
.filebar .off { color: #4a4a4a; }
.filter { display: flex; align-items: center; margin-left: auto; width: 197px; height: 20px; padding-left: 7px; background: #171717; border: 1px solid #303030; border-radius: 2px; }
.filter input { flex: 1; min-width: 0; }
.filelist { flex: 1; display: flex; flex-direction: column; justify-content: space-between; margin: 0 5px 0 6px; background: #1c1c1c; border-bottom: 1px solid #333; border-right: 1px solid #2b2b2b; border-left: 1px solid #2b2b2b; }
.filelist table { width: 100%; table-layout: fixed; border-collapse: collapse; }
.filelist th { height: 20px; padding: 0; font-weight: 400; text-align: left; background: #222; border-bottom: 1px solid #333; white-space: nowrap; overflow: hidden; }
.filelist th .icon { display: inline-block; margin-left: 3px; }
.filelist td { height: 18px; padding: 0; color: #3d8fe6; border-bottom: 1px solid #2e2e2e; white-space: nowrap; overflow: hidden; }
.filelist .num { font-size: 11px; padding-left: 2px; }
.filelist .cname { width: 39%; padding-left: 3px; }
.filelist .cstate { width: 9%; }
.filelist .cdur { width: 21%; }
.filelist .crate { width: 16%; }
.filelist .cchan { width: 13%; }
.filelist .num:nth-child(3) { padding-left: 9px; }
.fname .icon { display: inline-block; margin: 0 7px -1px 29px; color: #a8a8a8; }
.hscroll { width: 169px; height: 10px; border-radius: 5px; background: #303030; }
.preview { display: flex; align-items: center; justify-content: center; gap: 16px; height: 33px; padding: 0 0 2px 6px; color: #b8b8b8; }
.preview .off { color: #4a4a4a; }

.wide { gap: 40px; }
.wide button:nth-child(3) { margin-left: -18px; }
.switch { display: flex; align-self: center; margin: 5px 0 4px 6px; border: 1px solid #363636; border-radius: 2px; }
.switch button { width: 65px; height: 18px; }
.switch .on { background: #161616; color: #3d8fe6; }
.preset { display: flex; align-items: center; gap: 8px; margin: 0 5px; padding: 3px 3px 1px 0; border-top: 2px solid #2c2c2c; color: #b0b0b0; }
.preset label { margin-right: -4px; color: #9a9a9a; }
.pick { position: relative; flex: 1; display: flex; align-items: center; }
.pick select { width: 100%; height: 20px; padding-left: 12px; background: #1d1d1d; border: 1px solid #303030; border-radius: 3px; color: #c8c8c8; }
.pick .icon { position: absolute; right: 4px; pointer-events: none; }
.bar { width: 1px; height: 18px; background: #444; margin-left: 2px; }
.preset .dim { color: #5a5a5a; }
.which { margin: 4px 5px 7px; font-weight: 500; }
.slots { display: flex; height: 163px; margin: 0 5px 0 6px; overflow: hidden; background: #1c1c1c; border: 1px solid #333; }
.slots ol { flex: 1; margin: 0; padding: 0; list-style: none; }
.slots li { display: flex; align-items: center; height: 19px; border-bottom: 1px solid #2e2e2e; }
.no { width: 18px; text-align: center; }
.pw { width: 18px; height: 18px; margin-left: 1px; border: 1px solid #2a2a2a; color: #b0b0b0; }
.fx { flex: 1; height: 18px; border-right: 1px solid #2e2e2e; }
.go { width: 20px; padding-right: 4px; color: #b8b8b8; }
.vscroll { width: 10px; margin: 6px 1px 0; border-radius: 5px; background: #303030; }
.vscroll.short { height: 85px; margin-top: 1px; }
.io { display: flex; padding: 6px 12px 0 9px; }
.knobs { flex: none; width: 123px; color: #4c4c4c; }
.kr { display: flex; align-items: center; gap: 4px; height: 24px; margin-top: -3px; margin-bottom: 3px; white-space: nowrap; }
.kr .icon { margin-left: -1px; }
.meters { flex: 1; min-width: 0; }
.hm { height: 18px; margin-bottom: 6px; background: linear-gradient(90deg, transparent 1px, #f2e85c 1px 2px, transparent 2px calc(97% - 1px), #000 calc(97% - 1px) 97%, transparent 97%); border: 1px solid #000; }
.hm + .hm { margin-bottom: 0; }
.ruler { display: block; overflow: visible; }
.ruler line { stroke: #999; }
.ruler text { fill: #9a9a9a; font-size: 9px; text-anchor: middle; }
.ruler text:first-of-type { text-anchor: start; }
.mix { display: flex; align-items: center; height: 18px; padding: 0 12px 0 9px; color: #4c4c4c; }
.mix label { width: 48px; }
.mix input { flex: 1; appearance: none; height: 12px; margin: 0 5px 0 11px; }
.mix input::-webkit-slider-runnable-track { height: 2px; background: #3c3c3c; }
.mix input::-webkit-slider-thumb { appearance: none; width: 10px; height: 10px; margin-top: -4px; border: 2px solid #505050; border-radius: 50%; background: #222; }
.mix output { width: 58px; text-align: right; font-size: 11px; }
.rackfoot { display: flex; gap: 3px; margin: 7px 5px 0 4px; padding: 2px 0 4px; border-top: 2px solid #2c2c2c; color: #b8b8b8; }
.rackfoot button { width: 19px; height: 20px; border: 1px solid #2c2c2c; border-radius: 3px; }
.rackfoot .on { background: #141414; color: #3d8fe6; }
.rackfoot .off { color: #4a4a4a; }

.hist { flex: none; }
.hist .tabs { height: 32px; padding-top: 0; align-items: center; }
.histlist { display: flex; height: 224px; margin: 0 5px 0 6px; overflow: hidden; background: #1c1c1c; border: 1px solid #333; border-bottom: 0; }
.histlist ul { flex: 1; display: flex; flex-direction: column; justify-content: flex-end; margin: 0; padding: 0; list-style: none; }
.histlist li { flex: none; display: flex; align-items: center; height: 19px; border-bottom: 1px solid #2e2e2e; }
.histlist .cur { background: #474747; font-weight: 500; }
.mk { width: 18px; padding-left: 1px; color: #c0c0c0; }
.hi { display: flex; justify-content: center; width: 16px; margin-right: 6px; color: #b0b0b0; }
.histfoot { display: flex; justify-content: space-between; align-items: center; height: 30px; padding: 0 10px 0 6px; color: #a0a0a0; }

.editor { border: 1px solid #4383c4; box-shadow: 0 0 0 1px #0f2a47; }
.editor .tabs { padding: 4px 10px 0; height: 35px; }
.editor .tabs button { gap: 8px; }
.overview { display: flex; align-items: center; justify-content: space-between; padding: 0 16px 0 4px; color: #b8b8b8; }
.strip { width: calc(100% - 24px); height: 28px; background: #000; margin-right: 13px; }
.thumb { display: flex; width: 44%; height: 30px; margin-top: -1px; background: #303030; border: solid #6b6b6b; border-width: 2px 0; border-radius: 5px; }
.grab { width: 6px; border: 2px solid #6b6b6b; border-radius: 3px; background: #303030; }
.end { margin-left: auto; }
.ov { width: 1px; height: 26px; margin-left: 40px; background: #c8303a; }
.headrow { display: flex; height: 44px; padding: 17px 28px 0 5px; }
.modes { flex: none; width: 223px; display: flex; justify-content: space-between; padding: 0 7px 0 2px; color: #b8b8b8; }
.modes button { width: 21px; height: 21px; border: 1px solid #2c2c2c; }
.grp { display: flex; }
.modes .on { background: #141414; color: #3d8fe6; }
.modes .fxb { font: italic 15px/18px "Noto Sans", sans-serif; }
.snap { display: flex; padding-top: 1px; }
.snap button:not(.on) { border-color: transparent; }
.time { flex: 1; height: 27px; border: 1px solid #000; border-width: 1px 1px 0 0; }
.time svg { display: block; }
.time text { fill: #9a9a9a; font-size: 11px; text-anchor: middle; }
.time .hms { text-anchor: start; }
.time line { stroke: #b0b0b0; }
.body { flex: 1; display: flex; padding: 0 9px 0 5px; }
.tracks { position: relative; flex: 1; display: flex; flex-direction: column; border-bottom: 1px solid #333; border-left: 1px solid #2c2c2c; }
.track { display: flex; height: 137px; border-bottom: 3px solid #323232; }
.color { width: 13px; border-radius: 4px 0 0 4px; }
.head { display: grid; grid-template-columns: 1fr 18px; grid-template-rows: 20px 26px 20px 22px 13px 22px; column-gap: 4px; width: 209px; padding: 6px 4px 0 4px; border-right: 1px solid #2e2e2e; color: #b8b8b8; }
.armed .head { background: #2f2f2f; }
.lane { flex: 1; background: #1c1c1c; }
.armed .lane { background: #4d4d4d; }
.r1 { grid-column: 1 / 3; display: flex; align-items: center; gap: 4px; }
.r1 button { width: 18px; height: 18px; background: #1b1b1b; border: 1px solid #2d2d2d; border-radius: 3px; font: 10px/12px "DejaVu Sans", sans-serif; }
.r1 .rec { background: #97201a; border-color: #5b8fe0; }
.r1 .faint { color: #4c4c4c; }
.ti { width: 14px; padding-left: 4px; }
.tn { flex: 1; margin-left: 5px; color: #8f8f8f; }
.r2 { display: flex; align-items: center; gap: 5px; color: #a8a8a8; }
.r2 b { width: 35px; color: #3286d8; font-size: 11px; }
.cast { margin-left: auto; }
.r3 { grid-column: 1; display: flex; align-items: center; gap: 5px; }
.r3 button { height: 18px; }
.pop { flex: 1; background: #1b1b1b; border: 1px solid #2e2e2e; border-radius: 2px; color: #c0c0c0; }
.r3 .pop { justify-content: space-between; padding: 0 5px; }
.ph { width: 18px; background: #1b1b1b; border: 1px solid #2d2d2d; border-radius: 2px; }
.auto { grid-row: 6; }
.exp { width: 13px; }
.r3 .exp { padding-right: 6px; }
.auto .pick select { height: 18px; padding-left: 6px; background: #1b1b1b; }
.meter { grid-column: 2; grid-row: 2 / 7; display: flex; align-items: flex-end; gap: 2px; margin: 9px 0 1px; padding: 0 0 1px; border: 1px solid #000; background: linear-gradient(transparent 8px, #000 8px 9px, transparent 9px); }
.meter i { flex: 1; height: 1px; background: #f2e85c; }
.armed .meter i { height: 34px; background: #3ef04e; border-top: 1px solid #f2e85c; }
.rest { flex: 1; width: 222px; border-right: 1px solid #2e2e2e; }
.cursor { position: absolute; inset: -14px 0 2px 222px; pointer-events: none; }
.ph-line { position: absolute; top: 0; bottom: 0; width: 1px; background: #a5141c; }
.ph-line svg { position: absolute; left: -6px; top: 0; }
.navi { display: flex; flex-direction: column; width: 18px; gap: 3px; background: #2a2a2a; border: solid #636363; border-width: 0 2px; }
.navi i { flex: 1; }
.cap { height: 4px; border: 2px solid #777; border-radius: 3px; }
.n1 { background: #5bbb98; }
.n2 { background: #686340; }
.n3 { background: #5a4d66; }
.n4 { background: #425064; }
.transport { display: flex; align-items: center; height: 37px; padding: 0 11px 1px 10px; }
.clock { flex: none; width: 229px; padding-top: 4px; font-size: 16px; line-height: 20px; color: #3286d8; }
.keysrow { display: flex; color: #b8b8b8; }
.key { position: relative; }
.key button { width: 30px; height: 24px; }
.key .dim { color: #4f4f4f; }
.key .record { color: #f23b3b; background: #292929; border: 1px solid #2f2f2f; }
.pointer { position: absolute; left: 15px; bottom: 27px; pointer-events: none; }
.tip { position: absolute; z-index: 3; left: 16px; top: 29px; padding: 2px 4px 3px; background: #fff; color: #555; border: 1px solid #aaa; box-shadow: 2px 2px 2px #0008; white-space: nowrap; font-size: 13px; font-family: "Noto Sans", "Noto Sans CJK SC", sans-serif; }
.zoomrow { display: flex; margin-left: auto; color: #4c4c4c; }
.zoomrow button { width: 30px; height: 24px; }

.sound .tabs { height: 30px; border-bottom: 2px solid #2d2d2d; }
.none { height: 30px; padding: 7px 10px 0; font-style: italic; color: #858585; border-bottom: 2px solid #2d2d2d; }
.spre { display: flex; align-items: center; gap: 7px; height: 36px; padding: 0 10px 2px; color: #464646; border-bottom: 2px solid #2d2d2d; }
.spre .pick select { background: #272727; border-color: #272727; }
.blank { height: 31px; border-bottom: 2px solid #2d2d2d; }
.hint { padding: 20px 20px 10px; }
.kinds { display: flex; flex-direction: column; gap: 10px; padding: 0 20px; color: #4c4c4c; }
.kinds button { height: 30px; gap: 6px; padding-left: 13px; border: 1px solid #2c2c2c; border-radius: 3px; }

.bottom { grid-column: 2 / 4; display: flex; gap: 4px; }
.level { flex: 1; padding: 0 6px; }
.level .tabs { padding: 5px 5px 0; height: 33px; }
.lv { height: 41px; border: solid #000; border-width: 1px 0 1px 1px; background: linear-gradient(90deg, #f2e85c 1px, #1b1b1b 1px); }
.range { width: 244px; align-items: flex-end; padding: 27px 23px 0 0; }
.range table { border-collapse: collapse; text-align: left; }
.range th { height: 20px; padding: 0 0 0 26px; font-weight: 400; }
.range td { height: 20px; padding: 0 0 0 28px; font-size: 11px; color: #3286f0; }

.status { display: flex; align-items: center; height: 20px; padding-left: 8px; background: #222; color: #8f8f8f; }
.msg { flex: 1; }
.cell { padding: 0 7px 0 8px; border-left: 1px solid #303030; }
.cell small { font-size: 7px; vertical-align: 1px; }
.mem { width: 262px; }
.taskbar { display: flex; height: 8px; overflow: hidden; background: linear-gradient(90deg, #050a12 61%, #343434 65%); }
.t1 { width: 48px; margin-left: 217px; background: #a85a24; }
.t2 { width: 48px; margin-left: 442px; background: #3c3f43; }
.tc { margin: 5px 40px 0 auto; color: #fff; font-size: 14px; line-height: 14px; }

.speed { position: absolute; top: 221px; right: 33px; display: flex; width: 104px; height: 25px; border-radius: 3px; overflow: hidden; border: 1px solid #2c9cf0; background: #d2f1ff; }
.bd { display: flex; align-items: center; justify-content: center; width: 29px; background: #2c9cf0; }
.rate { flex: 1; display: flex; align-items: center; gap: 5px; padding-left: 3px; background: linear-gradient(90deg, #7cdaff 54%, #d2f1ff 54%); color: #52a8cc; font-family: "Noto Sans", sans-serif; }
.rate .icon { color: #1279b8; }
.ears { position: absolute; right: 247px; bottom: 187px; }
.stray { position: absolute; right: 90px; bottom: 56px; color: #b8d0e0; font-size: 11px; }
.brand { position: absolute; right: 106px; bottom: 27px; display: flex; align-items: center; width: 340px; height: 160px; padding-left: 26px; gap: 23px; background: #222f54; color: #d0cfd3; }
.cn { display: flex; justify-content: space-between; width: 202px; font-weight: 700; font-size: 42px; line-height: 42px; }
.en { margin-top: 12px; font: 24px/24px "DejaVu Sans", sans-serif; color: #b9bdc9; white-space: nowrap; }
.ime { position: absolute; right: 5px; bottom: 8px; display: flex; align-items: center; justify-content: space-between; width: 201px; height: 21px; padding-right: 5px; background: #fff; color: #2474b8; z-index: 2; }
.ime b { font-size: 15px; }
.pt { font-size: 14px; font-weight: 700; }
.pale { color: #b4bcc4; }
</style>
